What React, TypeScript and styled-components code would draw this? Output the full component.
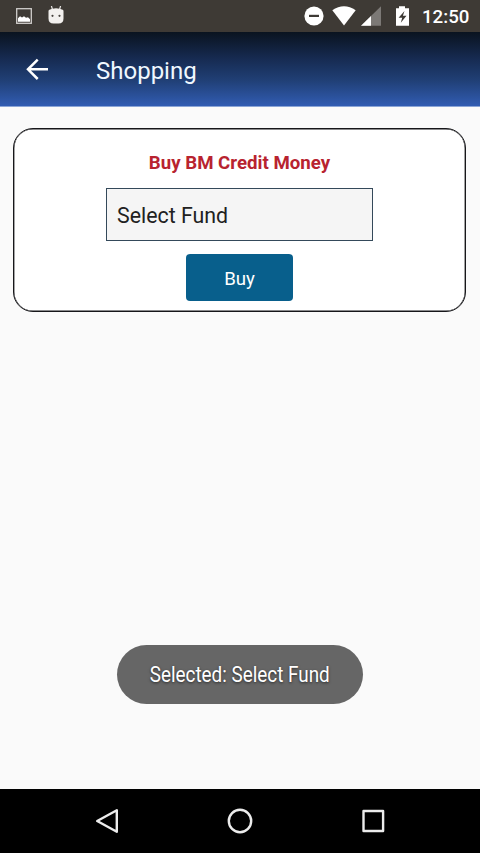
import React from "react";
import styled, { createGlobalStyle } from "styled-components";

interface CondensedProps {
  $ratio: number;
}

const App = () => {
  return (
    <React.Fragment>
      <GlobalStyle />
      <Screen>
        <StatusBar>
          <StatusGroup>
            <PictureIcon />
            <RobotIcon />
          </StatusGroup>
          <StatusGroup>
            <SystemIcons />
            <Clock>12:50</Clock>
          </StatusGroup>
        </StatusBar>
        <Header>
          <BackButton aria-label="Back">
            <svg width="24" height="24" viewBox="0 0 24 24" fill="none">
              <path
                d="M23 12.3H3.5M12.7 2.6L3 12.3L12.7 22"
                stroke="#fff"
                strokeWidth="2.5"
              />
            </svg>
          </BackButton>
          <Title>Shopping</Title>
        </Header>
        <Content>
          <Card>
            <CardTitle>Buy BM Credit Money</CardTitle>
            <FundSelect>Select Fund</FundSelect>
            <BuyButton>Buy</BuyButton>
          </Card>
          <Toast>
            <ToastText $ratio={0.885}>Selected: Select Fund</ToastText>
          </Toast>
        </Content>
        <NavBar>
          <NavButton aria-label="Back">
            <svg width="28" height="28" viewBox="0 0 28 28">
              <path d="M23.8 3.2V24.8L4.2 14Z" />
            </svg>
          </NavButton>
          <NavButton aria-label="Home">
            <svg width="28" height="28" viewBox="0 0 28 28">
              <circle cx="14" cy="14" r="11.2" />
            </svg>
          </NavButton>
          <NavButton aria-label="Recents">
            <svg width="28" height="28" viewBox="0 0 28 28">
              <rect x="3.5" y="4" width="19.6" height="20" />
            </svg>
          </NavButton>
        </NavBar>
      </Screen>
    </React.Fragment>
  );
};

const PictureIcon = () => (
  <svg width="16" height="16" viewBox="0 0 16 16">
    <rect x="0.7" y="0.7" width="14.6" height="14.6" fill="none" stroke="#d0cecc" strokeWidth="1.3" />
    <path d="M2 13.8V10.3L4 8.3L6 9.5L8 8.2L10 9.8L12 9.3L14 11.3V13.8Z" fill="#fff" />
  </svg>
);

const RobotIcon = () => (
  <svg width="16" height="20" viewBox="0 0 16 20">
    <path d="M3.3 -0.5L4.6 4M12.7 -0.5L11.4 4" stroke="#e8e6e4" strokeWidth="1.2" />
    <path
      d="M0.5 5Q0.5 3.5 2 3.5L4.5 2.7Q8 2 11.5 2.7L14 3.5Q15.5 3.5 15.5 5V12.5Q15.5 17.5 10.5 17.5H5.5Q0.5 17.5 0.5 12.5Z"
      fill="#f2f0ee"
    />
    <circle cx="4.5" cy="9.8" r="1.1" fill="#45413c" />
    <circle cx="11.5" cy="9.8" r="1.1" fill="#45413c" />
  </svg>
);

// do not disturb, wifi, signal and charging battery
const SystemIcons = () => (
  <svg width="106" height="22" viewBox="0 0 106 22">
    <circle cx="10" cy="11" r="9.6" fill="#fff" />
    <rect x="5" y="9.8" width="10" height="2.2" fill="#3e3a35" />
    <path d="M28.3 5.2Q40 -2.8 51.7 5.2L40 20.5Z" fill="#fff" />
    <path d="M77 1.3V20.7H57Z" fill="#7c7976" />
    <path d="M67 11V20.7H57Z" fill="#fff" />
    <path d="M92 3.2H95V1.2H101V3.2H105V20.7H92Z" fill="#fff" />
    <path d="M100.5 6L94.6 12.8H98.2L96.8 17.8L102.5 10.8H98.9Z" fill="#3e3a35" />
  </svg>
);

const GlobalStyle = createGlobalStyle`
  * {
    box-sizing: border-box;
  }

  body {
    margin: 0;
    font-family: Roboto, "Noto Sans", sans-serif;
  }

  button {
    padding: 0;
    border: 0;
    font-family: inherit;
  }
`;

const Screen = styled.div`
  display: flex;
  flex-direction: column;
  width: 480px;
  height: 853px;
  background: #fafafa;
`;

const StatusBar = styled.div`
  display: flex;
  justify-content: space-between;
  align-items: center;
  height: 32px;
  padding: 0 10px 0 16px;
  background: #3e3a35;
`;

const StatusGroup = styled.div`
  display: flex;
  align-items: center;
  gap: 16px;

  svg {
    display: block;
  }
`;

const Clock = styled.span`
  width: 48px;
  margin-left: -4px;
  padding-top: 2px;
  color: #fff;
  font-size: 18.7px;
  font-weight: 500;
  line-height: 30px;
  white-space: nowrap;
`;

const Header = styled.header`
  display: flex;
  align-items: center;
  height: 75px;
  padding-left: 25px;
  border-bottom: 1px solid #8ba5d6;
  background: linear-gradient(#09131f, #162a50 35%, #203f75 65%, #315cb2);
`;

const BackButton = styled.button`
  display: flex;
  width: 24px;
  height: 24px;
  background: none;
`;

const Title = styled.h1`
  margin: 3px 0 0 47px;
  color: #f0f8ff;
  font-size: 24px;
  font-weight: 400;
  line-height: 32px;
`;

const Content = styled.main`
  display: flex;
  flex: 1;
  flex-direction: column;
  justify-content: space-between;
  align-items: center;
  padding: 21px 14px 85px 13px;
`;

const Card = styled.section`
  display: flex;
  flex-direction: column;
  align-items: center;
  width: 453px;
  height: 184px;
  padding-top: 21px;
  border: 1px solid #17171a;
  border-radius: 20px;
  background: #fff;
  box-shadow: inset 0 0 0 0.4px #17171a;
`;

const CardTitle = styled.h2`
  margin: 0;
  color: #b8232f;
  font-size: 18.67px;
  font-weight: 700;
  line-height: 26px;
`;

const FundSelect = styled.div`
  width: 267px;
  height: 53px;
  margin-top: 12px;
  padding-left: 10px;
  border: 1px solid #34495a;
  background: #f5f5f5;
  color: #212121;
  font-size: 21.33px;
  line-height: 53px;
`;

const BuyButton = styled.button`
  width: 107px;
  height: 47px;
  margin-top: 13px;
  padding-top: 2px;
  border-radius: 4px;
  background: #085f8c;
  color: #fff;
  font-size: 18.67px;
`;

const Toast = styled.div`
  display: flex;
  justify-content: center;
  align-items: center;
  width: 246px;
  height: 59px;
  padding-top: 1px;
  border-radius: 30px;
  background: #666;
`;

const ToastText = styled.span<CondensedProps>`
  color: #fff;
  font-size: 21.33px;
  line-height: 30px;
  white-space: nowrap;
  text-shadow: 0 1px 3px rgba(0, 0, 0, 0.6);
  transform: scaleX(${(props) => props.$ratio});
`;

const NavBar = styled.nav`
  display: flex;
  justify-content: center;
  align-items: center;
  gap: 105.5px;
  height: 64px;
  background: #000;
`;

const NavButton = styled.button`
  display: flex;
  background: none;

  svg {
    fill: none;
    stroke: #ececec;
    stroke-width: 2.4;
    stroke-linejoin: round;
  }
`;

export default App;
